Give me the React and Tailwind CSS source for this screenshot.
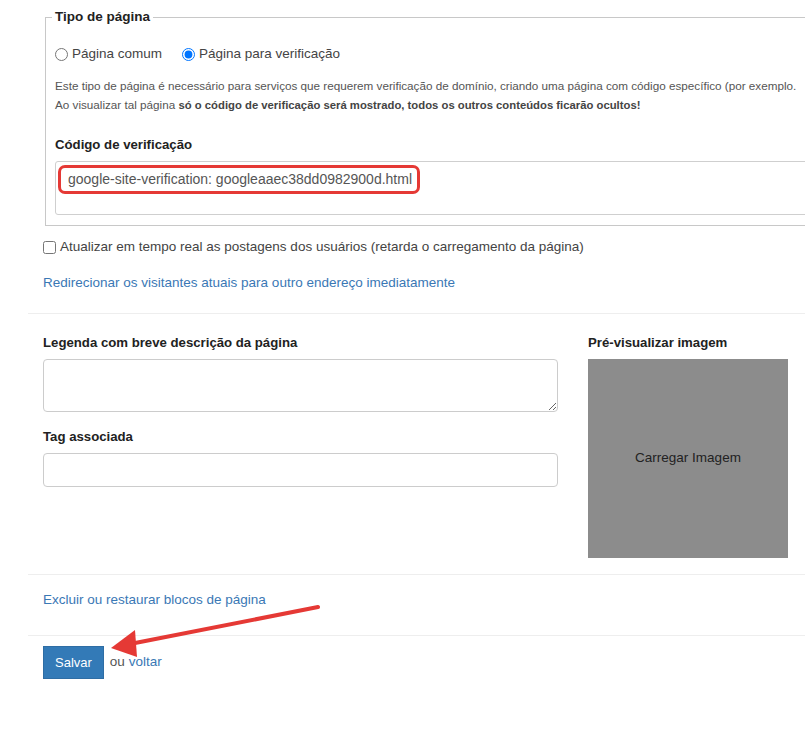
import React from 'react';

// Page settings form — verification page type, caption, tag, image preview
export default function App() {
  return (
    <div className="relative w-[805px] h-[745px] overflow-hidden bg-white text-[13.5px] text-[#333]" style={{ fontFamily: '"Liberation Sans", Arial, sans-serif' }}>
      <div className="pl-[28px]">
        {/* Tipo de página */}
        <div className="pl-[17px] pt-[7px]">
          <fieldset className="w-[800px] border border-[#c8c8c8] pl-[9px] pb-[10px]">
            <legend className="-ml-[3px] px-[3px] font-bold text-[13.5px] leading-[20px] text-[#222]">Tipo de página</legend>
            <div className="mt-[17px] flex items-center h-[20px] text-[#444]">
              <label className="flex items-center">
                <input type="radio" name="tipo" className="m-0 w-[13px] h-[13px]" />
                <span className="ml-[4px]">Página comum</span>
              </label>
              <label className="flex items-center ml-[20px]">
                <input type="radio" name="tipo" defaultChecked className="m-0 w-[13px] h-[13px]" />
                <span className="ml-[4px]">Página para verificação</span>
              </label>
            </div>
            <div className="mt-[12px] text-[11.7px] leading-[19px] text-[#555]">
              <p>Este tipo de página é necessário para serviços que requerem verificação de domínio, criando uma página com código específico (por exemplo.</p>
              <p>Ao visualizar tal página <b className="text-[#444] text-[11.3px]">só o código de verificação será mostrado, todos os outros conteúdos ficarão ocultos!</b></p>
            </div>
            <div className="mt-[20px] font-bold text-[13.2px] leading-[20px] text-[#222]">Código de verificação</div>
            <div className="mt-[6px] h-[54px] border border-[#cfcfcf] rounded-[3px] pl-[2px] pt-[3px]">
              <span className="inline-block border-[3px] border-[#e53935] rounded-[7px] pl-[7px] pr-[5px] h-[29px] text-[14px] leading-[23px] text-[#555]">
                google-site-verification: googleaaec38dd0982900d.html
              </span>
            </div>
          </fieldset>
        </div>

        <div className="pl-[15px]">
          <label className="mt-[11px] flex items-center h-[20px] text-[#444]">
            <input type="checkbox" className="m-0 w-[13px] h-[13px]" />
            <span className="ml-[4px]">Atualizar em tempo real as postagens dos usuários (retarda o carregamento da página)</span>
          </label>
          <div className="mt-[16px] leading-[20px]">
            <a className="text-[#3a78b5]">Redirecionar os visitantes atuais para outro endereço imediatamente</a>
          </div>
        </div>

        <div className="mt-[20px] border-t border-[#eeeeee]" />

        {/* Legenda / Tag / Preview */}
        <div className="pl-[15px] pt-[19px] flex">
          <div className="w-[515px]">
            <div className="font-bold text-[13.2px] leading-[20px] text-[#222]">Legenda com breve descrição da página</div>
            <textarea className="mt-[6px] block w-full h-[53px] border border-[#cccccc] rounded-[4px]" />
            <div className="mt-[15px] font-bold text-[13.2px] leading-[20px] text-[#222]">Tag associada</div>
            <input type="text" className="mt-[6px] block w-full h-[34px] border border-[#cccccc] rounded-[4px]" />
          </div>
          <div className="ml-[30px] w-[200px]">
            <div className="font-bold text-[13.2px] leading-[20px] text-[#222]">Pré-visualizar imagem</div>
            <div className="mt-[6px] w-[200px] h-[199px] bg-[#8c8c8c] flex items-center justify-center text-[#222]">
              Carregar Imagem
            </div>
          </div>
        </div>

        <div className="mt-[16px] border-t border-[#eeeeee]" />

        <div className="pl-[15px] pt-[15px] leading-[20px]">
          <a className="text-[#3a78b5]">Excluir ou restaurar blocos de página</a>
        </div>

        <div className="mt-[25px] border-t border-[#eeeeee]" />

        <div className="pl-[15px] pt-[10px] flex items-center">
          <button className="h-[33px] px-[11px] bg-[#337ab7] border border-[#2e6da4] text-white text-[13px]">Salvar</button>
          <span className="ml-[6px] text-[#555]">ou <a className="text-[#3a78b5]">voltar</a></span>
        </div>
      </div>

      {/* annotation arrow */}
      <svg className="absolute left-0 top-0 pointer-events-none" width="805" height="745">
        <line x1="318" y1="607" x2="130" y2="644" stroke="#e53935" strokeWidth="4" strokeLinecap="round" />
        <polygon points="111,648 135,630 137,657" fill="#e53935" />
      </svg>
    </div>
  );
}
